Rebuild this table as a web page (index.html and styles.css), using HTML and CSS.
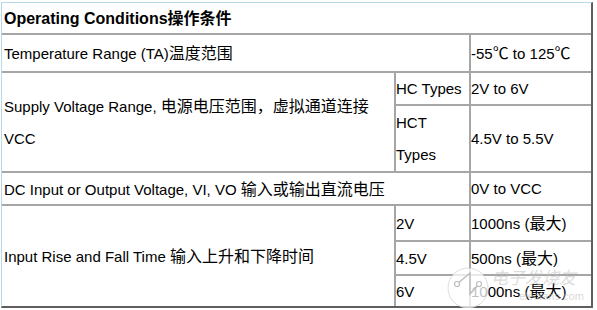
FILE: index.html
```html
<!DOCTYPE html>
<html lang="zh">
<head>
<meta charset="utf-8">
<title>Operating Conditions</title>
<link rel="stylesheet" href="styles.css">
</head>
<body>
<div class="wrap">
  <table class="spec">
    <colgroup>
      <col class="c-label">
      <col class="c-type">
      <col class="c-val">
    </colgroup>
    <tr class="r-head">
      <th colspan="3" class="lbl">Operating Conditions<span class="zh">操作条件</span></th>
    </tr>
    <tr class="r-temp">
      <td colspan="2" class="lbl">Temperature Range (TA)<span class="zh">温度范围</span></td>
      <td>-55<span class="zh">℃</span> to 125<span class="zh">℃</span></td>
    </tr>
    <tr class="r-hc">
      <td rowspan="2" class="lbl multi">Supply Voltage Range, <span class="zh">电源电压范围，虚拟通道连接</span> VCC</td>
      <td>HC Types</td>
      <td>2V to 6V</td>
    </tr>
    <tr class="r-hct">
      <td class="multi">HCT Types</td>
      <td>4.5V to 5.5V</td>
    </tr>
    <tr class="r-dc">
      <td colspan="2" class="lbl">DC Input or Output Voltage, VI, VO <span class="zh">输入或输出直流电压</span></td>
      <td>0V to VCC</td>
    </tr>
    <tr class="r-2v">
      <td rowspan="3" class="lbl">Input Rise and Fall Time <span class="zh">输入上升和下降时间</span></td>
      <td>2V</td>
      <td>1000ns (<span class="zh">最大</span>)</td>
    </tr>
    <tr class="r-45v">
      <td>4.5V</td>
      <td>500ns (<span class="zh">最大</span>)</td>
    </tr>
    <tr class="r-6v">
      <td>6V</td>
      <td>1000ns (<span class="zh">最大</span>)</td>
    </tr>
  </table>
  <div class="watermark" aria-hidden="true">
    <svg class="wm-logo" width="44" height="44" viewBox="0 0 44 44">
      <circle cx="22" cy="22" r="20" fill="rgba(255,255,255,0.75)" stroke="rgba(200,200,200,0.6)" stroke-width="1"/>
      <polyline points="11,18 24,7 24,28 33,18" fill="none" stroke="#bdbdbd" stroke-width="1.5"/>
      <circle cx="11" cy="18" r="2.5" fill="#fff" stroke="#bdbdbd" stroke-width="1.2"/>
      <circle cx="33" cy="18" r="2.5" fill="#fff" stroke="#bdbdbd" stroke-width="1.2"/>
    </svg>
    <span class="wm-cn">电子发烧友</span>
    <span class="wm-en">elecfans.com</span>
  </div>
</div>
</body>
</html>
```
FILE: styles.css
```css
html, body {
  margin: 0;
  padding: 0;
  background: #ffffff;
}

body {
  font-family: "Liberation Sans", Arial, "Noto Sans CJK SC", sans-serif;
  font-size: 15px;
  color: #000000;
}

.wrap {
  position: relative;
  margin: 2px 0 0 1px;
  width: 592px;
  box-sizing: border-box;
  border-style: solid;
  border-width: 1px 2px 2px 1px;
  border-color: #b7d7ea #5f5f5f #5f5f5f #b7d7ea;
}

.spec {
  border-collapse: collapse;
  border-style: hidden;
  table-layout: fixed;
  width: 589px;
}

.c-label { width: 393px; }
.c-type { width: 75px; }
.c-val { width: 121px; }

.spec td,
.spec th {
  border: 2px solid #a6a6a6;
  padding: 0;
  vertical-align: middle;
  text-align: left;
  font-weight: normal;
  line-height: 29px;
}

.spec th {
  font-weight: bold;
  font-size: 16px;
}

.spec .lbl {
  padding-left: 2px;
}

.spec .multi {
  line-height: 31.5px;
}

.zh {
  font-family: "Noto Sans CJK SC", sans-serif;
  font-size: 16px;
}

.r-head { height: 30px; }
.r-temp { height: 38px; }
.r-hc { height: 33px; }
.r-hct { height: 67px; }
.r-dc { height: 33px; }
.r-2v { height: 36px; }
.r-45v { height: 34px; }
.r-6v { height: 31px; }

.watermark {
  position: absolute;
  left: 444px;
  top: 262px;
  width: 150px;
  height: 44px;
  pointer-events: none;
}

.wm-logo {
  position: absolute;
  left: 0;
  top: 1px;
}

.wm-cn {
  position: absolute;
  left: 45px;
  top: 2px;
  font-family: "Noto Sans CJK SC", sans-serif;
  font-size: 17px;
  line-height: 20px;
  font-style: italic;
  color: rgba(190, 190, 190, 0.55);
  letter-spacing: 0;
}

.wm-en {
  position: absolute;
  left: 73px;
  top: 24px;
  font-family: "Liberation Sans", Arial, sans-serif;
  font-size: 11px;
  line-height: 14px;
  color: rgba(190, 190, 190, 0.6);
}
```
